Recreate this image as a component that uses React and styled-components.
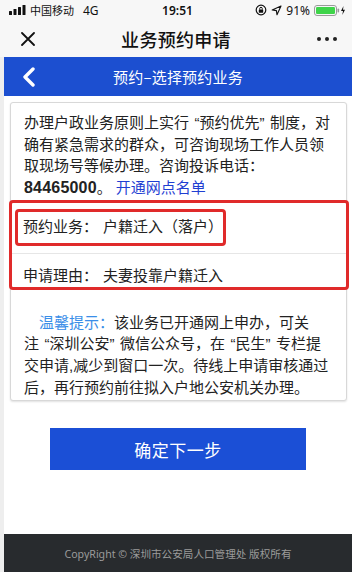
import React from "react";
import styled, { createGlobalStyle } from "styled-components";

const GlobalStyle = createGlobalStyle`
  html, body { margin: 0; padding: 0; background: #ffffff; }
  body { font-family: "Noto Sans CJK SC", "Noto Sans", sans-serif; }
  * { box-sizing: border-box; }
`;

const Screen = styled.div`
  width: 352px;
  height: 572px;
  display: flex;
  flex-direction: column;
  overflow: hidden;
  background: #ffffff;
`;

const StatusBar = styled.div`
  height: 20px;
  background: #f7f7f7;
  display: grid;
  grid-template-columns: 1fr auto 1fr;
  align-items: center;
  padding: 0 6px 0 9px;
  font-family: "Noto Sans", "Noto Sans CJK SC", sans-serif;
  font-size: 12px;
  color: #111;
`;

const StatusLeft = styled.div`
  display: flex;
  align-items: center;
  gap: 3px;
`;

const Carrier = styled.span`
  font-family: "Noto Sans CJK SC", sans-serif;
  font-size: 11px;
`;

const Network = styled.span`
  margin-left: 6px;
  font-size: 12px;
`;

const Clock = styled.span`
  font-weight: 600;
  font-size: 12px;
`;

const StatusRight = styled.div`
  display: flex;
  align-items: center;
  justify-content: flex-end;
  gap: 4px;
  font-size: 12px;
`;

const NavBar = styled.div`
  height: 37px;
  background: #f7f7f7;
  display: grid;
  grid-template-columns: 50px 1fr 50px;
  align-items: center;
`;

const NavTitle = styled.div`
  text-align: center;
  font-size: 18px;
  font-weight: 500;
  color: #111;
  letter-spacing: 0.3px;
`;

const NavIcon = styled.div`
  display: flex;
  justify-content: ${(p) => (p.$right ? "flex-end" : "flex-start")};
  padding: ${(p) => (p.$right ? "0 14px 0 0" : "0 0 0 21px")};
`;

const Page = styled.div`
  flex: 1;
  display: flex;
  flex-direction: column;
  border-left: 4px solid #eeeeee;
  background: #ffffff;
`;

const Header = styled.div`
  height: 39px;
  background: #1c4fd0;
  display: grid;
  grid-template-columns: 40px 1fr 40px;
  align-items: center;
  color: #fff;
`;

const HeaderTitle = styled.div`
  text-align: center;
  font-size: 15px;
  letter-spacing: 0.2px;
`;

const BackButton = styled.div`
  display: flex;
  padding-left: 18px;
`;

const Card = styled.div`
  margin: 6px 5px 0 6px;
  border: 1px solid #d8d8d8;
  border-radius: 3px;
  box-shadow: 0 1px 2px rgba(0, 0, 0, 0.12);
  background: #fff;
  color: #222;
  font-family: "Liberation Sans", "Noto Sans CJK SC", sans-serif;
  font-size: 15px;
  line-height: 21.7px;
`;

const Intro = styled.p`
  margin: 0;
  padding: 9px 12px 0 13px;
`;

const Quote = styled.span`
  margin-left: ${(p) => (p.$open ? "5.5px" : "0")};
  margin-right: ${(p) => (p.$open ? "0" : "5.5px")};
`;

const Phone = styled.b`
  font-weight: 700;
  font-size: 16px;
  letter-spacing: 0.2px;
`;

const Link = styled.span`
  color: #1f3fd2;
  margin-left: 4px;
`;

const Annotated = styled.div`
  margin: 1px -3px 0 -2px;
  border: 3px solid #e02a2a;
  border-radius: 4px;
`;

const Row = styled.div`
  display: flex;
  align-items: center;
  padding: ${(p) => p.$pad};
  border-top: ${(p) => (p.$divided ? "1px solid #e6e6e6" : "none")};
`;

const Highlight = styled.div`
  display: inline-flex;
  align-items: center;
  height: 37px;
  padding: 0 0 0 5px;
  margin-left: 1px;
  border: 3px solid #e02a2a;
  border-radius: 4px;
`;

const Label = styled.span`
  white-space: nowrap;
`;

const Value = styled.span`
  margin-left: 5px;
  white-space: nowrap;
`;

const Tip = styled.p`
  margin: 0;
  padding: 22px 16px 2px 13px;
  text-indent: 15px;
`;

const TipTitle = styled.span`
  color: #3a8ee8;
`;

const PrimaryButton = styled.button`
  align-self: center;
  margin-top: 27px;
  width: 256px;
  height: 42px;
  border: none;
  border-radius: 0;
  background: #1b4fd6;
  color: #fff;
  font-family: "Noto Sans CJK SC", sans-serif;
  font-size: 17px;
  letter-spacing: 0.5px;
  padding: 0;
`;

const Spacer = styled.div`
  flex: 1;
`;

const Footer = styled.div`
  height: 38px;
  background: #282b2e;
  color: #9b9b9b;
  font-family: "Noto Sans", "Noto Sans CJK SC", sans-serif;
  font-size: 10.6px;
  display: flex;
  align-items: center;
  justify-content: center;
`;

const Signal = () => (
  <svg width="18" height="10" viewBox="0 0 18 10">
    <rect x="0" y="6" width="3" height="4" rx="0.5" fill="#111" />
    <rect x="4.5" y="4" width="3" height="6" rx="0.5" fill="#111" />
    <rect x="9" y="2" width="3" height="8" rx="0.5" fill="#111" />
    <rect x="13.5" y="0" width="3" height="10" rx="0.5" fill="#111" />
  </svg>
);

const LockIcon = () => (
  <svg width="12" height="12" viewBox="0 0 12 12">
    <circle cx="6" cy="6" r="4.8" fill="none" stroke="#111" strokeWidth="1.2" />
    <rect x="3.8" y="5.6" width="4.4" height="3.2" rx="0.5" fill="#111" />
    <path d="M4.7 5.6 V4.6 A1.3 1.3 0 0 1 7.3 4.6 V5.6" fill="none" stroke="#111" strokeWidth="1" />
  </svg>
);

const LocationIcon = () => (
  <svg width="11" height="11" viewBox="0 0 11 11">
    <path d="M10 1 L1.2 5 L5.4 5.6 L6 9.8 Z" fill="none" stroke="#111" strokeWidth="1.1" strokeLinejoin="round" />
  </svg>
);

const Battery = () => (
  <svg width="32" height="11" viewBox="0 0 32 11">
    <rect x="0.5" y="0.5" width="22" height="10" rx="2.5" fill="none" stroke="#9a9a9a" strokeWidth="1" />
    <rect x="2" y="2" width="19" height="7" rx="1.2" fill="#3fd44a" />
    <rect x="23.5" y="3.5" width="1.6" height="4" rx="0.8" fill="#9a9a9a" />
    <path d="M29.5 1 L27 6 H29 L28.3 10 L31 4.8 H29 Z" fill="#111" />
  </svg>
);

const CloseIcon = () => (
  <svg width="14" height="14" viewBox="0 0 14 14">
    <path d="M1 1 L13 13 M13 1 L1 13" stroke="#111" strokeWidth="1.8" strokeLinecap="round" />
  </svg>
);

const MoreIcon = () => (
  <svg width="22" height="6" viewBox="0 0 22 6">
    <circle cx="3" cy="3" r="2" fill="#222" />
    <circle cx="11" cy="3" r="2" fill="#222" />
    <circle cx="19" cy="3" r="2" fill="#222" />
  </svg>
);

const BackIcon = () => (
  <svg width="14" height="20" viewBox="0 0 14 20">
    <path d="M11 2 L3 10 L11 18" fill="none" stroke="#fff" strokeWidth="3.4" strokeLinecap="round" strokeLinejoin="round" />
  </svg>
);

const Q = ({ children }) => (
  <>
    <Quote $open>“</Quote>
    {children}
    <Quote>”</Quote>
  </>
);

export default function App() {
  return (
    <Screen>
      <GlobalStyle />
      <StatusBar>
        <StatusLeft>
          <Signal />
          <Carrier>中国移动</Carrier>
          <Network>4G</Network>
        </StatusLeft>
        <Clock>19:51</Clock>
        <StatusRight>
          <LockIcon />
          <LocationIcon />
          <span>91%</span>
          <Battery />
        </StatusRight>
      </StatusBar>
      <NavBar>
        <NavIcon>
          <CloseIcon />
        </NavIcon>
        <NavTitle>业务预约申请</NavTitle>
        <NavIcon $right>
          <MoreIcon />
        </NavIcon>
      </NavBar>
      <Page>
        <Header>
          <BackButton>
            <BackIcon />
          </BackButton>
          <HeaderTitle>预约–选择预约业务</HeaderTitle>
          <span />
        </Header>
        <Card>
          <Intro>
            办理户政业务原则上实行<Q>预约优先</Q>制度，对确有紧急需求的群众，可咨询现场工作人员领取现场号等候办理。咨询投诉电话：
            <Phone>84465000</Phone>。<Link>开通网点名单</Link>
          </Intro>
          <Annotated>
            <Row $pad="6px 0 7px 2px">
              <Highlight>
                <Label>预约业务：</Label>
                <Value>户籍迁入（落户）</Value>
              </Highlight>
            </Row>
            <Row $divided $pad="11px 0 0 11px">
              <Label>申请理由：</Label>
              <Value>夫妻投靠户籍迁入</Value>
            </Row>
          </Annotated>
          <Tip>
            <TipTitle>温馨提示：</TipTitle>
            该业务已开通网上申办，可关注<Q>深圳公安</Q>微信公众号，在<Q>民生</Q>专栏提交申请,减少到窗口一次。待线上申请审核通过后，再行预约前往拟入户地公安机关办理。
          </Tip>
        </Card>
        <PrimaryButton>确定下一步</PrimaryButton>
        <Spacer />
        <Footer>CopyRight © 深圳市公安局人口管理处 版权所有</Footer>
      </Page>
    </Screen>
  );
}
